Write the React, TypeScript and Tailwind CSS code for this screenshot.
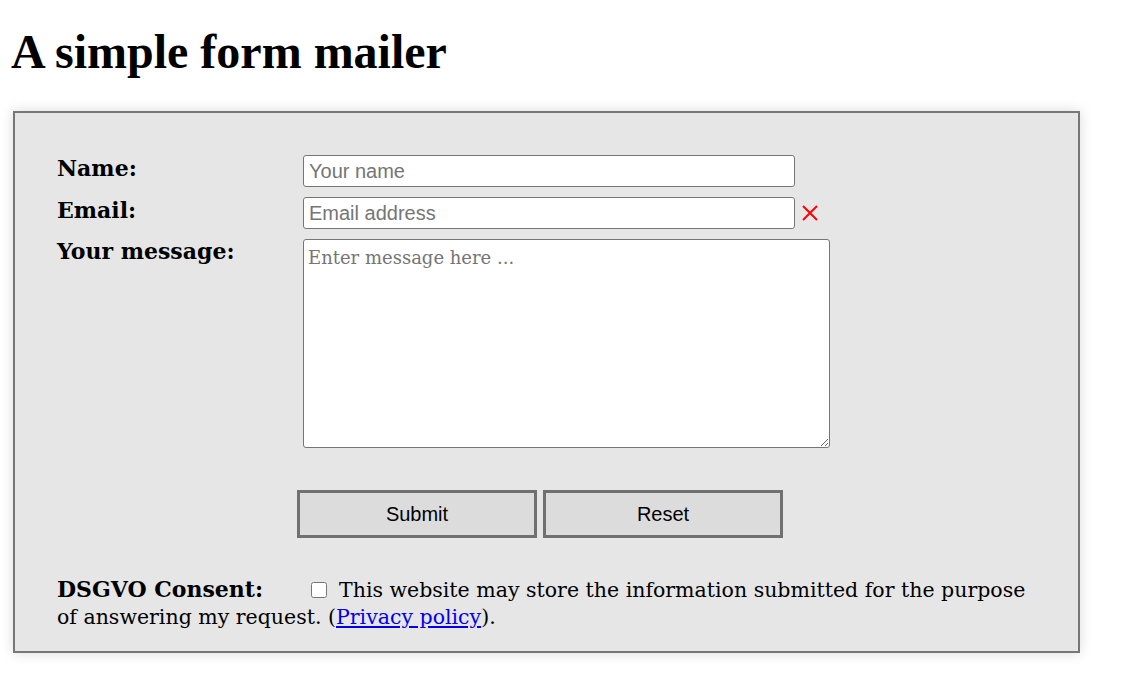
import { useState } from "react";

const serif = "font-['DejaVu_Serif',serif]";
const sans = "font-['Liberation_Sans',Arial,sans-serif]";

export default function App() {
  const [consent, setConsent] = useState(false);

  return (
    <div className="min-h-screen bg-white px-[11px] pt-[22px] text-black">
      <h1 className="font-['Liberation_Serif',serif] text-[48px] font-bold leading-[60px]">A simple form mailer</h1>

      <form className={`mt-[29px] ml-[2px] w-[1067px] border-2 border-[#777] bg-[#e6e6e6] px-[42px] pt-[42px] pb-[20px] shadow-[0_0_12px_rgba(0,0,0,0.15)] ${serif}`}>
        <div className="grid grid-cols-[246px_1fr] gap-y-[10px]">
          <label className="text-[22px] font-bold leading-[26px]">Name:</label>
          <div className="flex items-center">
            <input
              placeholder="Your name"
              className={`h-[32px] w-[492px] rounded-[3px] border border-[#767676] bg-white px-[5px] text-[20px] placeholder:text-[#757575] ${sans}`}
            />
          </div>

          <label className="text-[22px] font-bold leading-[26px]">Email:</label>
          <div className="flex items-center">
            <input
              placeholder="Email address"
              className={`h-[32px] w-[492px] rounded-[3px] border border-[#767676] bg-white px-[5px] text-[20px] placeholder:text-[#757575] ${sans}`}
            />
            <svg width="16" height="16" viewBox="0 0 16 16" className="ml-[7px]">
              <path d="M1 1L15 15M15 1L1 15" stroke="#ff0000" strokeWidth="2" />
            </svg>
          </div>

          <label className="-mt-[1px] text-[22px] font-bold leading-[26px]">Your message:</label>
          <div>
            <textarea
              placeholder="Enter message here ..."
              className="block h-[209px] w-[527px] rounded-[3px] border border-[#767676] bg-white px-[4px] py-[4px] text-[18px] placeholder:text-[#757575]"
            />
          </div>
        </div>

        <div className={`mt-[42px] ml-[240px] flex gap-[6px] ${sans}`}>
          <button type="button" className="h-[48px] w-[240px] border-[3px] border-[#707070] bg-[#dcdcdc] text-[20px]">
            Submit
          </button>
          <button type="reset" className="h-[48px] w-[240px] border-[3px] border-[#707070] bg-[#dcdcdc] text-[20px]">
            Reset
          </button>
        </div>

        <p className="mt-[38px] text-[20.5px] leading-[27px]">
          <span className="inline-block w-[254px] text-[22px] font-bold">DSGVO Consent:</span>
          <input
            type="checkbox"
            checked={consent}
            onChange={(e) => setConsent(e.target.checked)}
            className="mr-[12px] h-[16px] w-[16px] align-[-1px]"
          />
          This website may store the information submitted for the purpose of answering my request. (
          <a href="#" className="text-[#0000ee] underline">Privacy policy</a>).
        </p>
      </form>
    </div>
  );
}
